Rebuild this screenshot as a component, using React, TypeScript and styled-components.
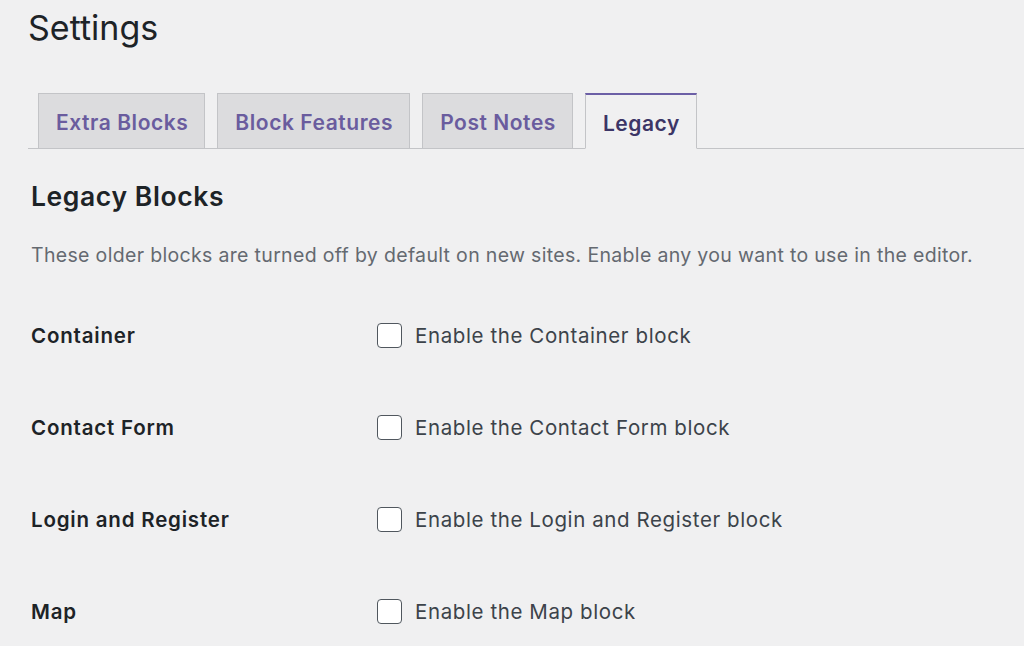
import React from "react"
import styled, { createGlobalStyle } from "styled-components"

const GlobalStyle = createGlobalStyle`
  html, body {
    margin: 0;
    padding: 0;
    background: #f0f0f1;
  }
  body {
    font-family: Inter, "Noto Sans", "Liberation Sans", sans-serif;
    color: #1d2327;
  }
`

const Wrap = styled.div`
  padding: 0 0 0 28px;
  overflow: hidden;
  height: 646px;
  box-sizing: border-box;
`

const Title = styled.h1`
  margin: 0;
  padding-top: 8px;
  font-size: 34px;
  font-weight: 400;
  line-height: 40px;
  color: #1d2327;
`

const TabBar = styled.nav`
  display: flex;
  align-items: flex-end;
  margin-top: 45px;
  padding-left: 10px;
  border-bottom: 1px solid #c3c4c7;
  gap: 12px;
`

const Tab = styled.a<{ $active?: boolean }>`
  display: block;
  height: 56px;
  box-sizing: border-box;
  padding: 2px 16px 0 17px;
  margin-bottom: -1px;
  font-size: 21px;
  font-weight: 600;
  letter-spacing: 0.55px;
  line-height: 54px;
  text-decoration: none;
  border: 1px solid #c3c4c7;
  border-top-color: ${(p) => (p.$active ? "#6c5fa6" : "#c3c4c7")};
  border-top-width: ${(p) => (p.$active ? "2px" : "1px")};
  border-bottom-color: ${(p) => (p.$active ? "#f0f0f1" : "#c3c4c7")};
  background: ${(p) => (p.$active ? "#f0f0f1" : "#dcdcde")};
  color: ${(p) => (p.$active ? "#3c3566" : "#6a5c9e")};
`

const Section = styled.div`
  padding-left: 3px;
`

const H2 = styled.h2`
  margin: 31px 0 0;
  font-size: 26.5px;
  font-weight: 600;
  letter-spacing: 0.6px;
  line-height: 32px;
  color: #1d2327;
`

const Desc = styled.p`
  margin: 29px 0 0;
  font-size: 19.5px;
  letter-spacing: 0.33px;
  line-height: 28px;
  color: #646970;
`

const Rows = styled.div`
  display: grid;
  margin-top: 52px;
  row-gap: 64px;
`

const Row = styled.div`
  display: grid;
  grid-template-columns: 346px 1fr;
  align-items: center;
  height: 28px;
`

const Label = styled.div`
  font-size: 20.5px;
  font-weight: 600;
  letter-spacing: 0.8px;
  color: #1d2327;
`

const CheckLabel = styled.label`
  display: flex;
  align-items: center;
  gap: 13px;
  font-size: 20.5px;
  letter-spacing: 0.6px;
  color: #3c434a;
`

const Box = styled.span`
  display: inline-block;
  flex: none;
  width: 25px;
  height: 25px;
  box-sizing: border-box;
  border: 1.5px solid #50575e;
  border-radius: 4px;
  background: #fff;
`

const rows = ["Container", "Contact Form", "Login and Register", "Map"]

export default function App() {
  return (
    <Wrap>
      <GlobalStyle />
      <Title>Settings</Title>
      <TabBar>
        <Tab>Extra Blocks</Tab>
        <Tab>Block Features</Tab>
        <Tab>Post Notes</Tab>
        <Tab $active>Legacy</Tab>
      </TabBar>
      <Section>
        <H2>Legacy Blocks</H2>
        <Desc>
          These older blocks are turned off by default on new sites. Enable any you want to use in the editor.
        </Desc>
        <Rows>
          {rows.map((r) => (
            <Row key={r}>
              <Label>{r}</Label>
              <CheckLabel>
                <Box />
                Enable the {r} block
              </CheckLabel>
            </Row>
          ))}
        </Rows>
      </Section>
    </Wrap>
  )
}
